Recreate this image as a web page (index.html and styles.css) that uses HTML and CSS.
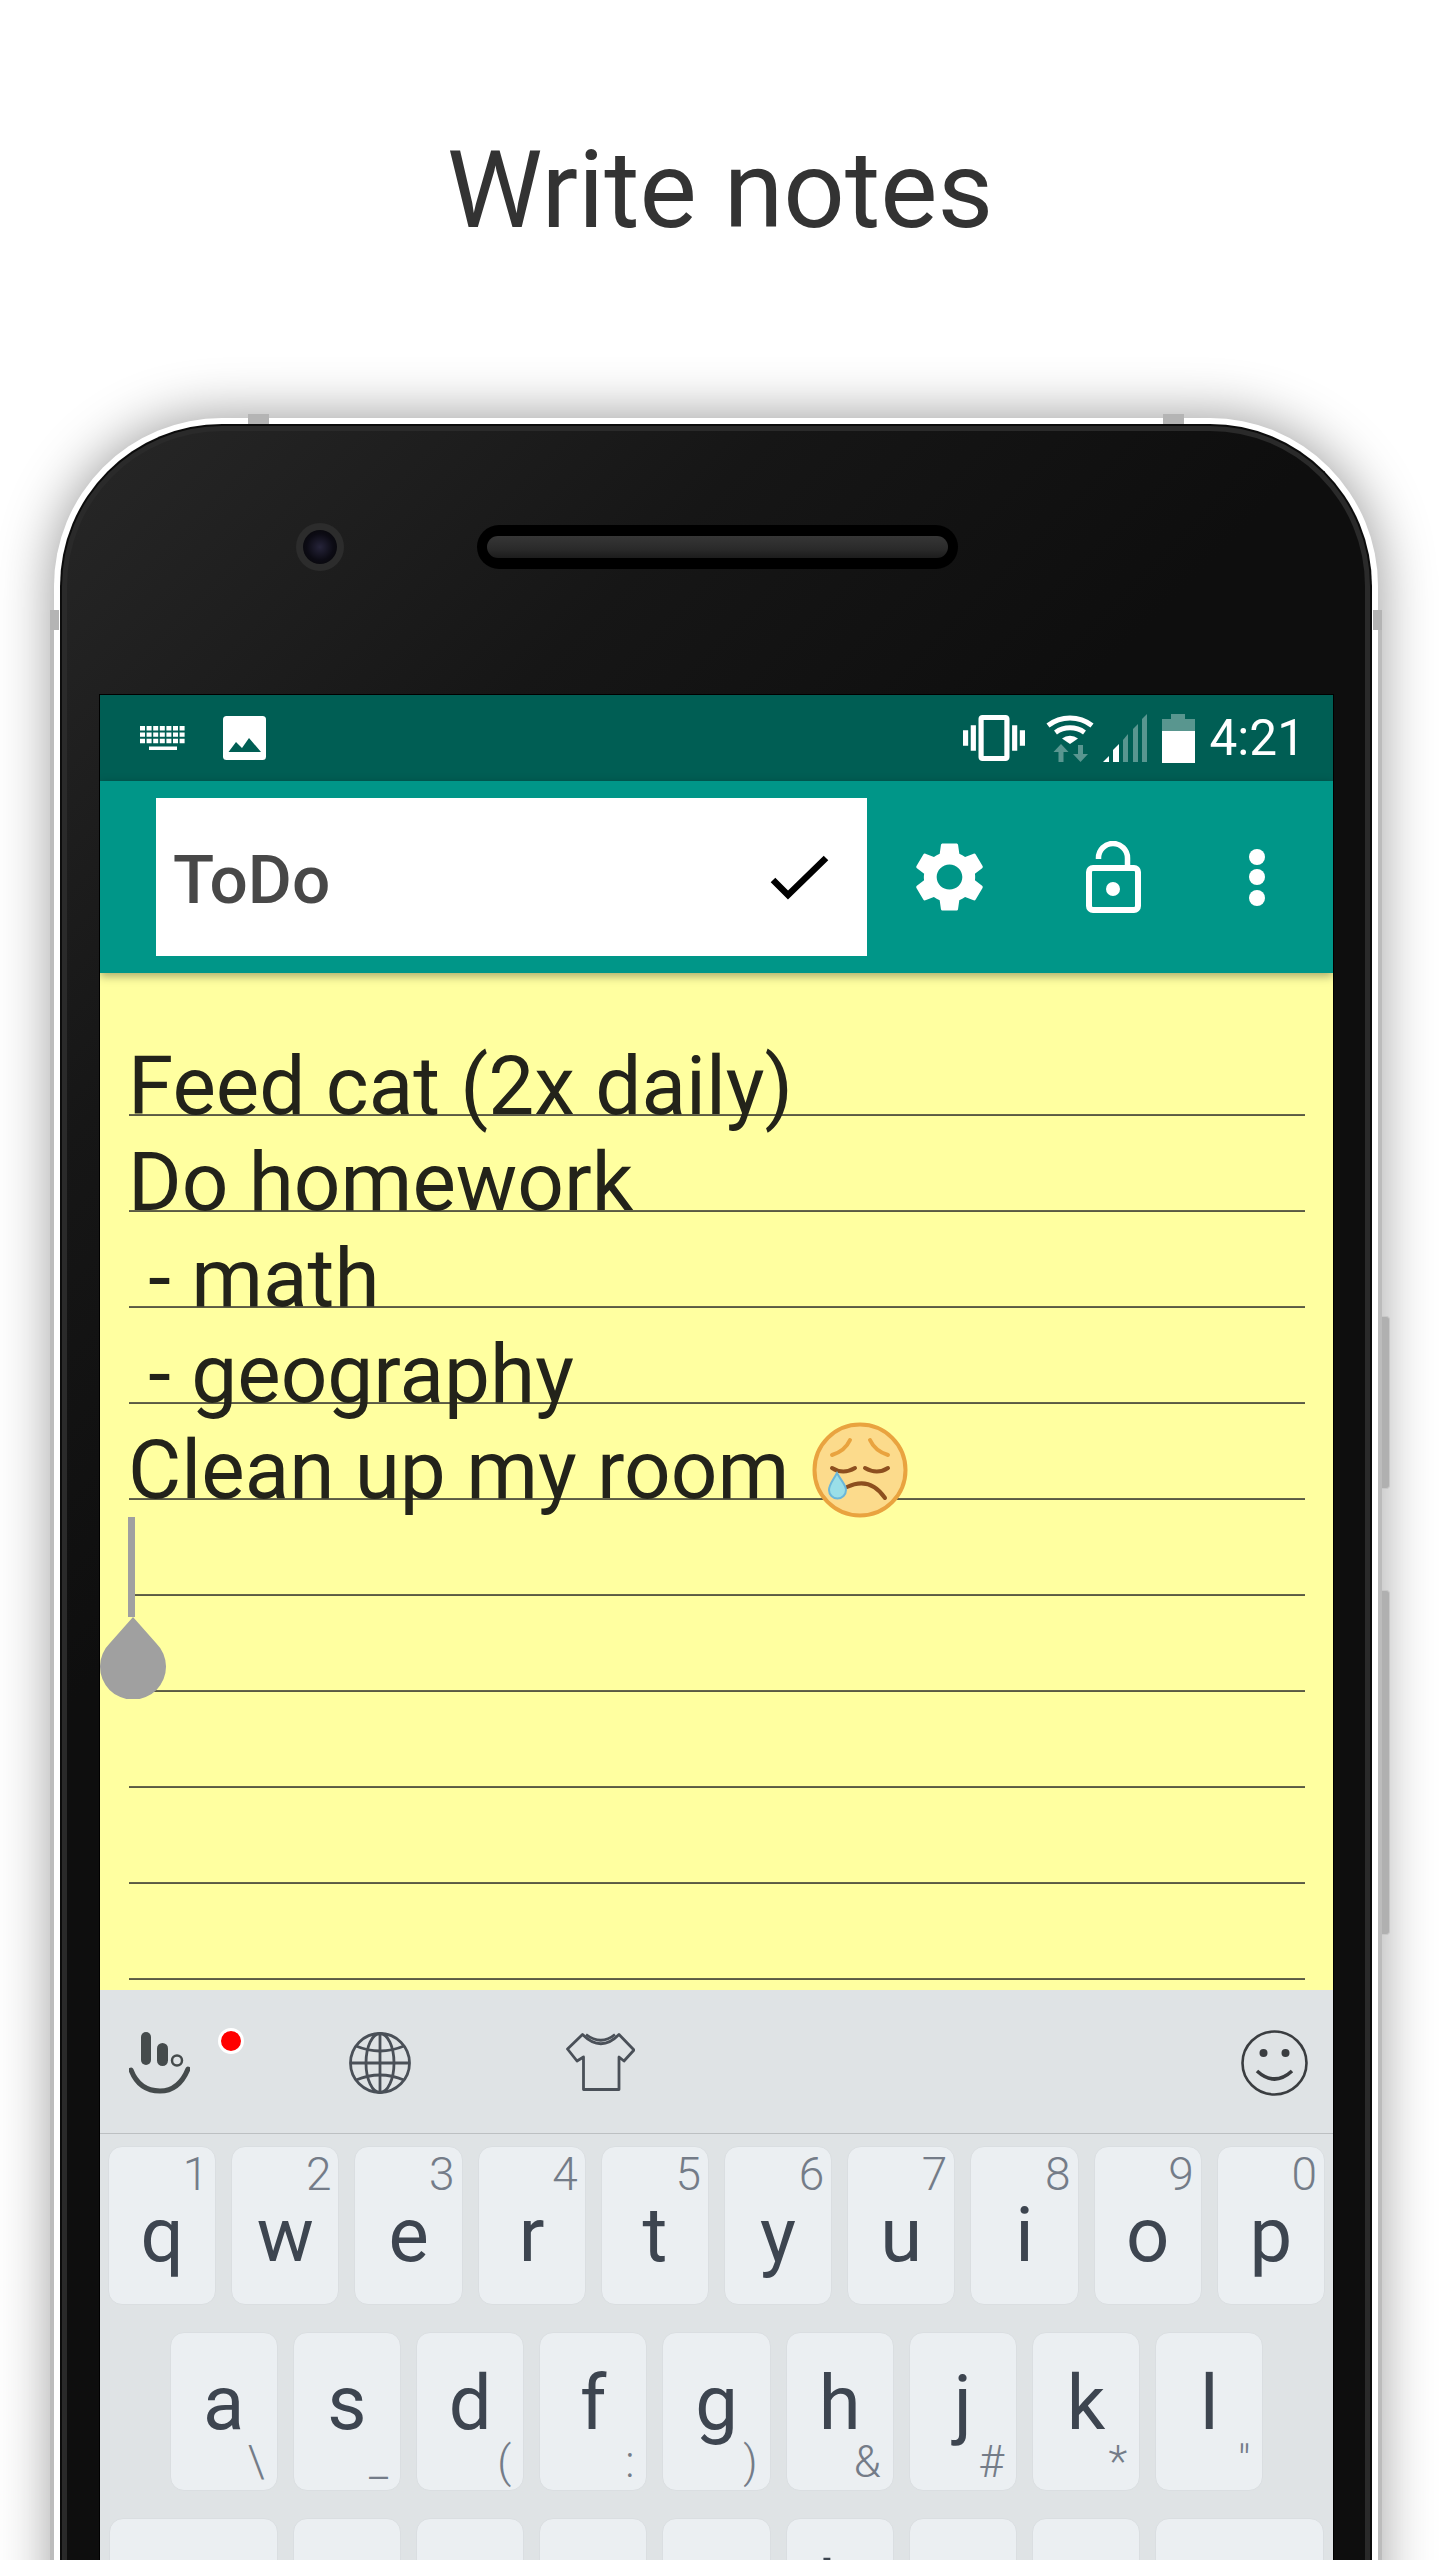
FILE: index.html
```html
<!DOCTYPE html>
<html>
<head>
<meta charset="utf-8">
<title>Write notes</title>
<link rel="stylesheet" href="styles.css">
</head>
<body>
<header class="headline"><h1>Write notes</h1></header>

<div class="phone">
  <span class="top-tab tab-l"></span>
  <span class="top-tab tab-r"></span>
  <span class="rail rail-l"></span>
  <span class="rail rail-r"></span>
  <span class="side-tab side-l"></span>
  <span class="side-tab side-r"></span>
  <span class="side-btn btn-power"></span>
  <span class="side-btn btn-volume"></span>

  <div class="bezel">
    <div class="front">
      <div class="earpiece">
        <div class="camera"><div class="lens"></div></div>
        <div class="speaker"><div class="grille"></div></div>
      </div>

      <div class="screen">
        <!-- status bar -->
        <div class="statusbar">
          <svg class="ic-keys" width="46" height="24" viewBox="0 0 46 24">
            <g stroke="#fff" stroke-width="4.4" stroke-dasharray="5 1.6" fill="none">
              <path d="M0 2.2H46"/>
              <path d="M0 8.6H46"/>
              <path d="M0 15H46"/>
            </g>
            <rect x="9" y="20.5" width="28" height="3.5" fill="#fff"/>
          </svg>
          <svg class="ic-image" width="43" height="44" viewBox="0 0 43 44">
            <rect width="43" height="44" rx="3.5" fill="#fff"/>
            <polygon points="5.5,36 13,26 19,32 26,22 38,36" fill="#005e54"/>
          </svg>
          <div class="status-right">
            <svg width="62" height="46" viewBox="0 3 24 18" preserveAspectRatio="none" fill="#fff">
              <path d="M0 15h2V9H0v6zm3 2h2V7H3v10zm19-8v6h2V9h-2zm-3 8h2V7h-2v10zM16.5 3h-9C6.67 3 6 3.67 6 4.5v15c0 .83.67 1.5 1.5 1.5h9c.83 0 1.5-.67 1.5-1.5v-15c0-.83-.67-1.5-1.5-1.5zM16 19H8V5h8v14z"/>
            </svg>
            <svg class="ic-wifi" width="48" height="48" viewBox="0 0 48 48">
              <g fill="none" stroke="#fff" stroke-width="5">
                <path d="M2 11.5A36 36 0 0 1 46 11.5"/>
                <path d="M9.5 18.5A25 25 0 0 1 38.5 18.5"/>
              </g>
              <path d="M16 24.5A13 13 0 0 1 32 24.5L24 30Z" fill="#fff"/>
              <g fill="#fff" opacity=".35">
                <polygon points="15,30 22.5,38 17.5,38 17.5,48 12.5,48 12.5,38 7.5,38"/>
                <polygon points="34.5,48 42,40 37,40 37,31 32,31 32,40 27,40"/>
              </g>
            </svg>
            <svg class="ic-signal" width="45" height="48" viewBox="0 0 45 48">
              <polygon points="1,48 7,48 7,42" fill="#fff"/>
              <polygon points="11,48 17,48 17,30 11,36" fill="#fff"/>
              <g fill="#fff" opacity=".35">
                <polygon points="21,48 26,48 26,20 21,26"/>
                <polygon points="31,48 36,48 36,10 31,15"/>
                <polygon points="40,48 45,48 45,0 40,5"/>
              </g>
            </svg>
            <svg class="ic-battery" width="33" height="49" viewBox="0 0 33 49">
              <path d="M9 0h14v5h10v12H0V5h9z" fill="#fff" opacity=".35"/>
              <rect y="17" width="33" height="32" fill="#fff"/>
            </svg>
            <span class="clock">4:21</span>
          </div>
        </div>

        <!-- toolbar -->
        <div class="appbar">
          <div class="title-box">
            <span class="title-text">ToDo</span>
            <svg width="59" height="46" viewBox="0 0 59 46">
              <polyline points="3,26 18,41 56,4" fill="none" stroke="#000" stroke-width="6.5"/>
            </svg>
          </div>
          <svg class="ic-gear" width="67" height="70" viewBox="2.6 2 18.8 20" preserveAspectRatio="none" fill="#fff">
            <path d="M19.14 12.94c.04-.3.06-.61.06-.94 0-.32-.02-.64-.07-.94l2.03-1.58c.18-.14.23-.41.12-.61l-1.92-3.32c-.12-.22-.37-.29-.59-.22l-2.39.96c-.5-.38-1.03-.7-1.62-.94l-.36-2.54c-.04-.24-.24-.41-.48-.41h-3.84c-.24 0-.43.17-.47.41l-.36 2.54c-.59.24-1.13.57-1.62.94l-2.39-.96c-.22-.08-.47 0-.59.22L2.74 8.87c-.12.21-.08.47.12.61l2.03 1.58c-.05.3-.09.63-.09.94s.02.64.07.94l-2.03 1.58c-.18.14-.23.41-.12.61l1.92 3.32c.12.22.37.29.59.22l2.39-.96c.5.38 1.03.7 1.62.94l.36 2.54c.05.24.24.41.48.41h3.84c.24 0 .44-.17.47-.41l.36-2.54c.59-.24 1.13-.56 1.62-.94l2.39.96c.22.08.47 0 .59-.22l1.92-3.32c.12-.22.07-.47-.12-.61l-2.01-1.58zM12 15.6c-1.98 0-3.6-1.62-3.6-3.6s1.62-3.6 3.6-3.6 3.6 1.62 3.6 3.6-1.62 3.6-3.6 3.6z"/>
          </svg>
          <svg class="ic-lock" width="55" height="72" viewBox="0 0 55 72">
            <rect x="3" y="27" width="49" height="42" rx="4" fill="none" stroke="#fff" stroke-width="6"/>
            <path d="M12.5 18v-1a14.5 14.5 0 0 1 29 0v10" fill="none" stroke="#fff" stroke-width="5.5"/>
            <circle cx="27" cy="48" r="7" fill="#fff"/>
          </svg>
          <div class="overflow-dots"><i></i><i></i><i></i></div>
        </div>

        <!-- note -->
        <div class="paper">
          <div class="note">
            <div class="note-line">Feed cat (2x daily)</div>
            <div class="note-line">Do homework</div>
            <div class="note-line"> - math</div>
            <div class="note-line"> - geography</div>
            <div class="note-line">Clean up my room <svg class="emoji" width="96" height="96" viewBox="0 0 96 96">
                <circle cx="48" cy="48" r="45.5" fill="#fcdb8c" stroke="#e9a33f" stroke-width="4"/>
                <g fill="none" stroke-linecap="round">
                  <path d="M20 33Q33 29 38 18" stroke="#e9a33f" stroke-width="4"/>
                  <path d="M58 18Q63 29 76 33" stroke="#e9a33f" stroke-width="4"/>
                  <path d="M20 46Q31 53 43 46" stroke="#8d4f1f" stroke-width="4"/>
                  <path d="M53 46Q65 53 76 46" stroke="#8d4f1f" stroke-width="4"/>
                  <path d="M35 65Q58 54 73 76" stroke="#8d4f1f" stroke-width="4"/>
                </g>
                <path d="M25 51C20 60 17 63 17 68A8.5 8.5 0 0 0 34 68C34 63 30 60 25 51Z" fill="#9adfe8" stroke="#6bb7d9" stroke-width="2"/>
              </svg></div>
          </div>
          <span class="caret"></span>
          <svg class="caret-handle" width="66" height="82" viewBox="0 0 66 82">
            <path d="M33 0L56 26A33 33 0 1 1 10 26Z" fill="#a0a0a0"/>
          </svg>
        </div>

        <!-- keyboard -->
        <div class="keyboard">
          <div class="kb-tools">
            <svg class="ic-touchpal" width="61" height="62" viewBox="0 0 61 62">
              <rect x="12" y="0" width="10" height="33" rx="5" fill="#454b4c"/>
              <rect x="28" y="11" width="11" height="23" rx="5.5" fill="#454b4c"/>
              <circle cx="48" cy="28.5" r="5" fill="none" stroke="#454b4c" stroke-width="2.5"/>
              <path d="M2 38Q10 59 31 59Q50 59 59 37" fill="none" stroke="#454b4c" stroke-width="5" stroke-linecap="round"/>
            </svg>
            <span class="red-dot"></span>
            <svg class="ic-globe" width="62" height="62" viewBox="0 0 62 62">
              <g fill="none" stroke="#4a5058" stroke-width="2.8">
                <ellipse cx="31" cy="31" rx="29.5" ry="29.5"/>
                <ellipse cx="31" cy="31" rx="14" ry="29.5"/>
                <path d="M31 1.5V60.5M1.5 31H60.5"/>
                <path d="M7 14Q31 24 55 14M7 48Q31 38 55 48"/>
              </g>
            </svg>
            <svg class="ic-shirt" width="69" height="59" viewBox="0 0 69 59">
              <g fill="none" stroke="#4a5058" stroke-width="2.8" stroke-linejoin="round">
                <path d="M16.5 1.5Q35 20 53 1.5L68 17 58 28 53 24V56.500H17.500V24L11 28 1.500 16Z"/>
                <path d="M20 1.500Q35 13 49 1.500"/>
              </g>
            </svg>
            <svg class="ic-smiley" width="67" height="66" viewBox="0 0 67 66">
              <ellipse cx="33.500" cy="33" rx="32" ry="31.500" fill="none" stroke="#3a3d40" stroke-width="2.600"/>
              <circle cx="22.500" cy="23" r="4" fill="#3a3d40"/>
              <circle cx="44.500" cy="23" r="4" fill="#3a3d40"/>
              <path d="M16 41Q33.500 57 51 41" fill="none" stroke="#3a3d40" stroke-width="3.600"/>
            </svg>
          </div>

          <div class="kb-keys">
            <div class="kb-row row-top">
              <div class="key">q<span class="hint">1</span></div>
              <div class="key">w<span class="hint">2</span></div>
              <div class="key">e<span class="hint">3</span></div>
              <div class="key">r<span class="hint">4</span></div>
              <div class="key">t<span class="hint">5</span></div>
              <div class="key">y<span class="hint">6</span></div>
              <div class="key">u<span class="hint">7</span></div>
              <div class="key">i<span class="hint">8</span></div>
              <div class="key">o<span class="hint">9</span></div>
              <div class="key">p<span class="hint">0</span></div>
            </div>
            <div class="kb-row">
              <div class="key">a<span class="hint">\</span></div>
              <div class="key">s<span class="hint">_</span></div>
              <div class="key">d<span class="hint">(</span></div>
              <div class="key">f<span class="hint">:</span></div>
              <div class="key">g<span class="hint">)</span></div>
              <div class="key">h<span class="hint">&amp;</span></div>
              <div class="key">j<span class="hint">#</span></div>
              <div class="key">k<span class="hint">*</span></div>
              <div class="key">l<span class="hint">"</span></div>
            </div>
            <div class="kb-row">
              <div class="key key-wide"></div>
              <div class="key"></div>
              <div class="key"></div>
              <div class="key"></div>
              <div class="key"></div>
              <div class="key">b</div>
              <div class="key"></div>
              <div class="key"></div>
              <div class="key key-wide"></div>
            </div>
          </div>
        </div>
      </div>
    </div>
  </div>
</div>
</body>
</html>
```

FILE: styles.css
```css
* {
  box-sizing: border-box;
}

html, body {
  margin: 0;
  height: 2560px;
  overflow: hidden;
  background-color: #ffffff;
  font-family: Roboto, "Liberation Sans", sans-serif;
}

.headline {
  height: 418px;
  padding-top: 127px;
  text-align: center;
}

.headline h1 {
  margin: 0;
  font-size: 108px;
  font-weight: 400;
  line-height: 126px;
  color: #333333;
}

/* phone body */
.phone {
  position: relative;
  width: 1324px;
  margin-left: 54px;
  padding: 6px 6px 0;
  background-color: #ffffff;
  border-radius: 168px 168px 0 0;
  box-shadow: 0 0 55px rgba(0, 0, 0, .42);
}

.bezel {
  padding: 5px 5px 0;
  background-color: #2a2a2a;
  border: 2px solid #0c0c0c;
  border-bottom: none;
  border-radius: 162px 162px 0 0;
}

.front {
  padding: 94px 33px 0;
  background: linear-gradient(135deg, #272727 0%, #161616 20%, #0e0e0e 36%);
  border-radius: 155px 155px 0 0;
}

.top-tab {
  position: absolute;
  top: -4px;
  width: 21px;
  height: 10px;
  background-color: #b4b4b4;
}

.tab-l { left: 194px; }
.tab-r { left: 1109px; }

.side-tab {
  position: absolute;
  top: 192px;
  width: 9px;
  height: 20px;
  background-color: #b4b4b4;
}

.side-l { left: -4px; }
.side-r { right: -4px; }

.rail {
  position: absolute;
  top: 212px;
  bottom: 0;
  width: 4px;
  background-color: #bcbcbc;
}

.rail-l { left: -4px; }
.rail-r { right: -4px; }

.side-btn {
  position: absolute;
  right: -12px;
  width: 8px;
  background-color: #b0b0b0;
  border: 1px solid #c8c8c8;
  border-left: none;
  border-radius: 0 4px 4px 0;
}

.btn-power { top: 898px; height: 173px; }
.btn-volume { top: 1172px; height: 345px; }

.earpiece {
  display: flex;
  align-items: center;
  height: 44px;
  margin-bottom: 126px;
  padding-left: 196px;
}

.camera {
  width: 48px;
  height: 48px;
  margin-right: 133px;
  padding: 7px;
  background-color: #2c2c2c;
  border-radius: 50%;
}

.lens {
  height: 100%;
  background: radial-gradient(circle, #26243a 0%, #0c0b14 55%, #050505 100%);
  border-radius: 50%;
}

.speaker {
  width: 481px;
  height: 44px;
  padding: 11px 10px;
  background-color: #000000;
  border-radius: 22px;
}

.grille {
  height: 22px;
  background: linear-gradient(#363636, #2a2a2a 60%, #1c1c1c);
  border-radius: 11px;
}

/* screen */
.screen {
  width: 1233px;
  overflow: hidden;
  outline: 1px solid #000000;
}

.statusbar {
  display: flex;
  align-items: center;
  height: 86px;
  padding: 0 28px 0 40px;
  background-color: #005e54;
}

.ic-keys { margin-right: 37px; }

.status-right {
  display: flex;
  align-items: center;
  margin-left: auto;
}

.ic-wifi { margin: 0 8px 0 21px; }
.ic-battery { margin: 0 15px 0 15px; }

.clock {
  font-size: 49.5px;
  line-height: 50px;
  color: #ffffff;
}

.appbar {
  position: relative;
  z-index: 2;
  display: flex;
  align-items: center;
  height: 192px;
  padding: 17px 0 17px 56px;
  background-color: #009688;
  box-shadow: 0 3px 9px rgba(0, 0, 0, .35);
}

.title-box {
  display: flex;
  align-items: center;
  justify-content: space-between;
  width: 711px;
  height: 158px;
  padding: 0 38px 0 17px;
  background-color: #ffffff;
}

.title-text {
  padding-top: 5px;
  font-size: 67.5px;
  font-weight: 500;
  color: #484848;
}

.ic-gear { margin: 0 103px 0 49px; }
.ic-lock { margin-right: 108px; }

.overflow-dots {
  display: flex;
  flex-direction: column;
  gap: 4.5px;
}

.overflow-dots i {
  width: 16px;
  height: 16px;
  background-color: #ffffff;
  border-radius: 50%;
}

/* lined paper */
.paper {
  position: relative;
  height: 1017px;
  padding-top: 65px;
  background-color: #ffffa0;
}

.note {
  min-height: 944px;
  margin: 0 28px 0 29px;
  background-image: linear-gradient(transparent calc(100% - 2px), #6f6f54 calc(100% - 2px), #5a5a42 calc(100% - 1px));
  background-position: 0 -18px;
  background-size: 100% 96px;
  background-repeat: repeat-y;
}

.note-line {
  height: 96px;
  margin-left: -1px;
  font-size: 81.9px;
  line-height: 96px;
  color: #23231a;
  white-space: pre;
}

.emoji {
  margin-left: 2px;
  vertical-align: -20px;
}

.caret {
  position: absolute;
  left: 28px;
  top: 544px;
  width: 7px;
  height: 100px;
  background-color: #a0a0a0;
}

.caret-handle {
  position: absolute;
  left: 0;
  top: 644px;
}

/* keyboard */
.keyboard {
  background-color: #dfe3e5;
}

.kb-tools {
  position: relative;
  display: flex;
  align-items: center;
  height: 144px;
  padding: 2px 25px 0 29px;
  border-bottom: 1px solid #bcc0c2;
}

.ic-touchpal { margin-right: 159px; }
.ic-globe { margin-right: 155px; }
.ic-smiley { margin-left: auto; }

.red-dot {
  position: absolute;
  left: 118px;
  top: 38px;
  width: 26px;
  height: 26px;
  background-color: #ff0000;
  border: 3px solid #ffffff;
  border-radius: 50%;
}

.kb-keys {
  display: flex;
  flex-direction: column;
  gap: 27px;
  padding-top: 12px;
}

.kb-row {
  display: flex;
  justify-content: center;
  gap: 15px;
}

.key {
  position: relative;
  flex: 0 0 108.2px;
  height: 159px;
  padding-top: 25px;
  font-size: 76px;
  line-height: 90px;
  text-align: center;
  color: #3d4550;
  background-color: #ebeff2;
  border: 1px solid #dadee1;
  border-radius: 14px;
}

.row-top .key {
  padding-top: 43px;
}

.key-wide {
  flex-basis: 169px;
}

.hint {
  position: absolute;
  right: 12px;
  bottom: 6px;
  font-size: 44px;
  font-weight: 300;
  line-height: 44px;
  color: #747c88;
}

.row-top .hint {
  top: 5px;
  right: 7px;
  bottom: auto;
  font-size: 46px;
}
```
